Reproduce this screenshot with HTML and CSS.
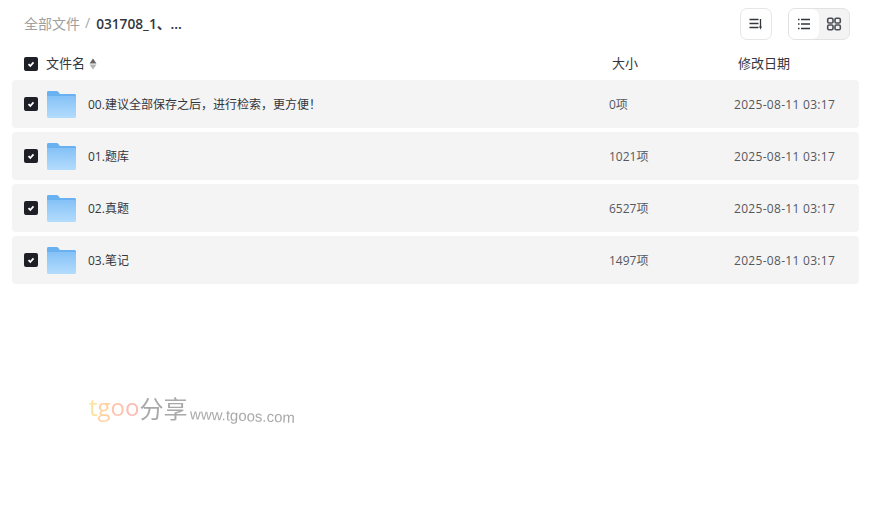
FILE: index.html
```html
<!DOCTYPE html>
<html>
<head>
    <title>全部文件</title>
    <link rel="stylesheet" href="styles.css">
</head>
<body>
    <div class="topbar">
        <div class="crumbs">
            <span class="crumb-root">全部文件</span>
            <span class="crumb-sep">/</span>
            <span class="crumb-current">031708_1、...</span>
        </div>
        <div class="tools">
            <button class="tool-btn">
                <svg width="16" height="16" viewBox="0 0 16 16"><path d="M1.500 3.500h9M1.500 7.500h9M1.500 11.500h9M12.500 3v8" stroke="#33363d" stroke-width="1.300" fill="none"/><path d="M11 10.500h3l-1.500 3z" fill="#33363d"/></svg>
            </button>
            <div class="view-switch">
                <div class="view-btn active">
                    <svg width="16" height="16" viewBox="0 0 16 16"><path d="M5 3.500h9M5 8h9M5 12.500h9M2 3.500h1.500M2 8h1.500M2 12.500h1.500" stroke="#33363d" stroke-width="1.300" fill="none"/></svg>
                </div>
                <div class="view-btn">
                    <svg width="16" height="16" viewBox="0 0 16 16"><g fill="none" stroke="#4a4d54" stroke-width="1.600"><rect x="1.700" y="2.200" width="5.300" height="4.800" rx="1.300"/><rect x="9" y="2.200" width="5.300" height="4.800" rx="1.300"/><rect x="1.700" y="9" width="5.300" height="4.800" rx="1.300"/><rect x="9" y="9" width="5.300" height="4.800" rx="1.300"/></g></svg>
                </div>
            </div>
        </div>
    </div>

    <div class="list-head">
        <div class="col-name">
            <span class="check"><svg width="10" height="10" viewBox="0 0 10 10"><path d="M2.500 5.200l1.800 1.800 3.200-3.600" stroke="#fff" stroke-width="1.800" fill="none"/></svg></span>
            <span class="head-label">文件名</span>
            <svg class="sort-arrows" width="8" height="12" viewBox="0 0 8 12"><path d="M4 .5L7.500 5.500H.5z" fill="#666"/><path d="M4 11.500L.5 6.500h7z" fill="#b4b4b4"/></svg>
        </div>
        <div class="col-size head-label-plain">大小</div>
        <div class="col-date head-label-plain">修改日期</div>
    </div>

    <div class="rows">
        <div class="row">
            <span class="check"><svg width="10" height="10" viewBox="0 0 10 10"><path d="M2.500 5.200l1.800 1.800 3.200-3.600" stroke="#fff" stroke-width="1.800" fill="none"/></svg></span>
            <svg class="folder" width="30" height="28" viewBox="0 0 30 28"><use href="#folder-icon"/></svg>
            <span class="file-name">00.建议全部保存之后，进行检索，更方便！</span>
            <span class="file-size">0项</span>
            <span class="file-date">2025-08-11 03:17</span>
        </div>
        <div class="row">
            <span class="check"><svg width="10" height="10" viewBox="0 0 10 10"><path d="M2.500 5.200l1.800 1.800 3.200-3.600" stroke="#fff" stroke-width="1.800" fill="none"/></svg></span>
            <svg class="folder" width="30" height="28" viewBox="0 0 30 28"><use href="#folder-icon"/></svg>
            <span class="file-name">01.题库</span>
            <span class="file-size">1021项</span>
            <span class="file-date">2025-08-11 03:17</span>
        </div>
        <div class="row">
            <span class="check"><svg width="10" height="10" viewBox="0 0 10 10"><path d="M2.500 5.200l1.800 1.800 3.200-3.600" stroke="#fff" stroke-width="1.800" fill="none"/></svg></span>
            <svg class="folder" width="30" height="28" viewBox="0 0 30 28"><use href="#folder-icon"/></svg>
            <span class="file-name">02.真题</span>
            <span class="file-size">6527项</span>
            <span class="file-date">2025-08-11 03:17</span>
        </div>
        <div class="row">
            <span class="check"><svg width="10" height="10" viewBox="0 0 10 10"><path d="M2.500 5.200l1.800 1.800 3.200-3.600" stroke="#fff" stroke-width="1.800" fill="none"/></svg></span>
            <svg class="folder" width="30" height="28" viewBox="0 0 30 28"><use href="#folder-icon"/></svg>
            <span class="file-name">03.笔记</span>
            <span class="file-size">1497项</span>
            <span class="file-date">2025-08-11 03:17</span>
        </div>
    </div>

    <!-- shared folder drawing -->
    <svg class="defs" width="0" height="0">
        <defs>
            <linearGradient id="folder-fill" x1="0" y1="0" x2="0" y2="1">
                <stop offset="0" stop-color="#84c1f6"/>
                <stop offset="1" stop-color="#b4dcfd"/>
            </linearGradient>
            <g id="folder-icon">
                <path d="M1 2.500C1 1.600 1.600 1 2.500 1h8.300c.6 0 1 .3 1.400 .8L14 4h14.500c.8 0 1.500.7 1.500 1.500V10H1z" fill="#6ab1f1"/>
                <path d="M1 6h27.500c.8 0 1.500.7 1.500 1.500v19c0 .8-.7 1.500-1.500 1.500H2.500C1.600 28 1 27.400 1 26.500z" fill="url(#folder-fill)"/>
                <rect x="24" y="10" width="3" height="1.500" fill="#8fc6f7"/>
            </g>
        </defs>
    </svg>

    <div class="watermark">
        <span class="wm-t">t</span><span class="wm-g">g</span><span class="wm-o1">o</span><span class="wm-o2">o</span><span class="wm-cn">分享</span>
        <span class="wm-url">www.tgoos.com</span>
    </div>
</body>
</html>
```

FILE: styles.css
```css
* {
    box-sizing: border-box;
}
html, body {
    height: 100%;
}
body {
    margin: 0;
    padding: 0 15px 0 12px;
    font-family: "Open Sans", "Noto Sans CJK SC", sans-serif;
    font-size: 12px;
    color: #33363d;
    background: #fff;
    position: relative;
    overflow: hidden;
}
.topbar {
    height: 48px;
    display: flex;
    align-items: center;
    justify-content: space-between;
    padding-left: 12px;
}
.crumbs {
    display: flex;
    align-items: center;
    font-size: 14px;
    margin-bottom: 3px;
}
.crumb-root {
    color: #a0a0a0;
}
.crumb-sep {
    color: #a8a8a8;
    margin: 0 6px 0 5px;
}
.crumb-current {
    font-weight: 600;
    font-size: 13.700px;
    color: #33363d;
}
.tools {
    display: flex;
    gap: 16px;
    margin-right: 9px;
}
.tool-btn {
    width: 32px;
    height: 32px;
    padding: 0;
    background: #fff;
    border: 1px solid #e6e6e6;
    border-radius: 7px;
    display: flex;
    align-items: center;
    justify-content: center;
}
.view-switch {
    display: flex;
    width: 62px;
    height: 32px;
    border: 1px solid #e2e2e2;
    border-radius: 7px;
    background: #f3f3f3;
    overflow: hidden;
}
.view-btn {
    flex: 1;
    display: flex;
    align-items: center;
    justify-content: center;
}
.view-btn.active {
    background: #fff;
    border-radius: 0 7px 7px 0;
}
.list-head {
    height: 32px;
    display: flex;
    align-items: center;
    font-size: 13px;
    padding-left: 12px;
}
.col-name {
    display: flex;
    align-items: center;
    width: 588px;
}
.head-label {
    margin: 0 0 3px 8px;
}
.head-label-plain {
    margin-bottom: 3px;
}
.sort-arrows {
    margin-left: 4px;
}
.col-size {
    width: 126px;
}
.check {
    width: 14px;
    height: 14px;
    background: #1f2027;
    border-radius: 2px;
    display: flex;
    align-items: center;
    justify-content: center;
    flex: none;
}
.rows {
    display: flex;
    flex-direction: column;
    gap: 4px;
}
.row {
    height: 48px;
    display: flex;
    align-items: center;
    padding-left: 12px;
    background: #f4f4f4;
    border-radius: 4px;
}
.folder {
    margin-left: 8px;
    flex: none;
}
.file-name {
    margin-left: 12px;
    width: 521px;
}
.file-size {
    width: 125px;
    color: #55585f;
}
.file-date {
    color: #55585f;
    letter-spacing: .3px;
}
.defs {
    position: absolute;
}
.watermark {
    position: absolute;
    left: 89px;
    top: 391px;
    display: flex;
    align-items: baseline;
    font-size: 24px;
    line-height: 32px;
    filter: blur(.4px);
    white-space: nowrap;
}
.wm-t {
    color: #fde2a0;
}
.wm-g {
    color: #fdd3a3;
}
.wm-o1 {
    color: #fdc4ae;
}
.wm-o2 {
    color: #fdbcb4;
}
.wm-cn {
    color: #a9a9a9;
    font-size: 24px;
    transform: translateY(2px);
}
.wm-url {
    color: #a9a9a9;
    font-family: "Liberation Sans", sans-serif;
    font-size: 15px;
    margin-left: 3px;
    transform: translateY(5px) rotate(2deg);
}
```
